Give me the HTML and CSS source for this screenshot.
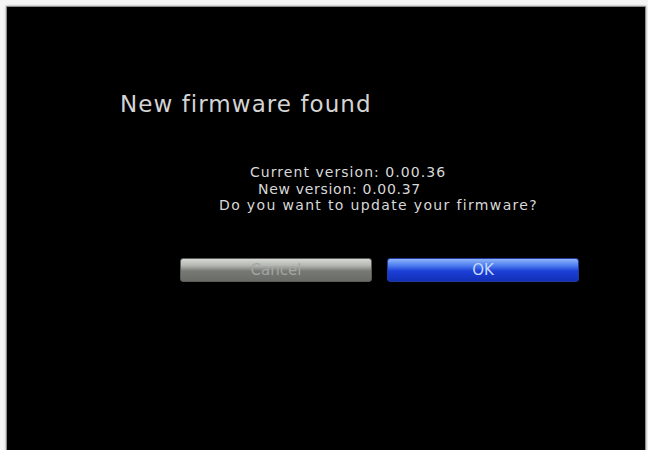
FILE: index.html
```html
<!DOCTYPE html>
<html lang="en">
<head>
  <meta charset="UTF-8" />
  <title>Firmware update</title>
  <link rel="stylesheet" href="styles.css">
</head>
<body>
  <div class="screen">
    <h1 class="title">New firmware found</h1>
    <div class="message">
      <p class="line line-current">Current version: 0.00.36</p>
      <p class="line line-new">New version: 0.00.37</p>
      <p class="line line-ask">Do you want to update your firmware?</p>
    </div>
    <div class="buttons">
      <button class="btn btn-cancel">Cancel</button>
      <button class="btn btn-ok">OK</button>
    </div>
  </div>
</body>
</html>
```

FILE: styles.css
```css
/* Page frame around the TV picture */
body {
  margin: 0;
  background: #f4f4f4;
  font-family: "DejaVu Sans", Verdana, sans-serif;
  overflow: hidden;
}
.screen {
  margin: 6px 2px 0 6px;
  height: 450px;
  background: #000;
  border: 1px solid #8a8a8a;
  box-shadow: 0 0 2px rgba(0, 0, 0, 0.4);
  padding: 83px 0 0 0;
  box-sizing: border-box;
}
.title {
  margin: 0 0 46px 113px;
  font-size: 23px;
  line-height: 28px;
  font-weight: normal;
  color: #d4d4d4;
  letter-spacing: 1.05px;
}
/* Version info block */
.message {
  display: flex;
  flex-direction: column;
  align-items: flex-start;
}
.line {
  margin: 0;
  font-size: 14px;
  line-height: 16.5px;
  color: #d8d8d8;
  white-space: nowrap;
}
.line-current { margin-left: 243px; letter-spacing: 1.05px; }
.line-new { margin-left: 251px; letter-spacing: 0.7px; }
.line-ask { margin-left: 212px; letter-spacing: 1.35px; }
/* Buttons */
.buttons {
  display: flex;
  gap: 15px;
  margin: 44px 0 0 173px;
}
.btn {
  width: 192px;
  height: 24px;
  border-radius: 3px;
  font-family: inherit;
  font-size: 15px;
  padding: 0;
  cursor: pointer;
}
.btn-cancel {
  color: #a4a6a2;
  border: 1px solid #5a5c58;
  background: linear-gradient(#d6d8d4 0%, #b4b6b2 30%, #767873 55%, #6a6c67 100%);
}
.btn-ok {
  color: #c4d8ff;
  border: 1px solid #1f3a9c;
  background: linear-gradient(#8fb4f8 0%, #4d7df0 30%, #1c3fd6 55%, #1230b8 100%);
}
```
